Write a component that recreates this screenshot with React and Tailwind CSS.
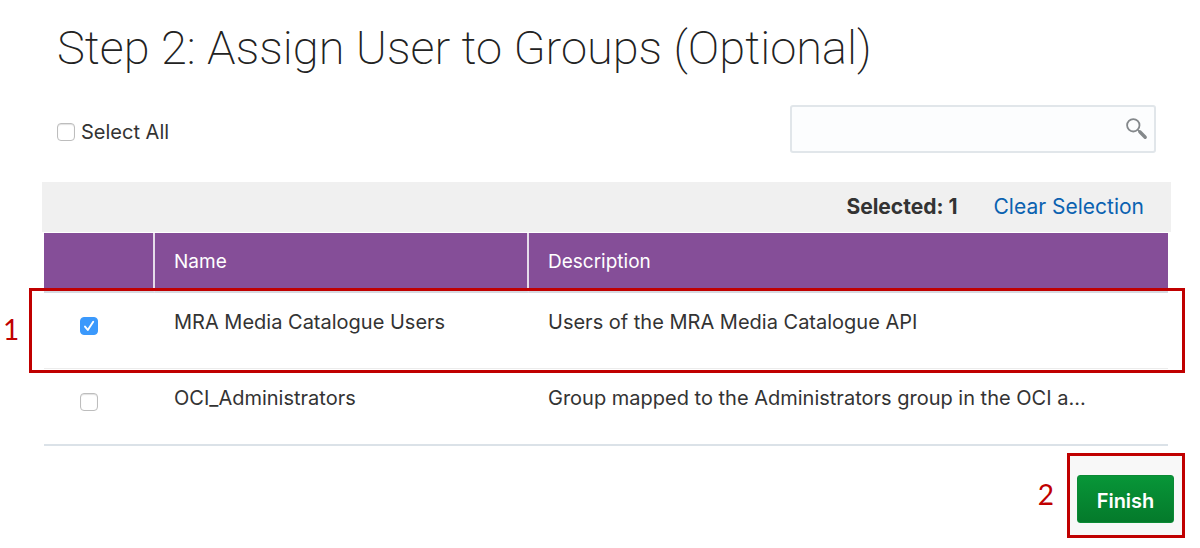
import { useState } from "react";

const groups = [
  {
    id: "mra",
    name: "MRA Media Catalogue Users",
    description: "Users of the MRA Media Catalogue API",
    callout: "1",
  },
  {
    id: "oci",
    name: "OCI_Administrators",
    description: "Group mapped to the Administrators group in the OCI a...",
  },
];

function Checkbox({ id, label, checked, onChange }) {
  return (
    <span className="grid size-[18px] shrink-0">
      <input
        id={id}
        type="checkbox"
        aria-label={label}
        checked={checked}
        onChange={onChange}
        className="col-start-1 row-start-1 size-[18px] appearance-none rounded-[4px] border border-[#bdbdbd] bg-white shadow-[inset_0_1px_1px_rgba(0,0,0,0.12)] checked:border-[#3b99fc] checked:bg-[#3b99fc] checked:shadow-none"
      />
      {checked && (
        <svg
          viewBox="0 0 18 18"
          aria-hidden="true"
          className="pointer-events-none col-start-1 row-start-1 size-[18px]"
        >
          <path
            d="M5 9.6 7.8 13 13.2 4.8"
            fill="none"
            stroke="white"
            strokeWidth="1.9"
            strokeLinecap="round"
            strokeLinejoin="round"
          />
        </svg>
      )}
    </span>
  );
}

export default function App() {
  const [selected, setSelected] = useState(["mra"]);
  const allSelected = selected.length === groups.length;

  const toggle = (id) =>
    setSelected((current) =>
      current.includes(id) ? current.filter((x) => x !== id) : [...current, id]
    );

  return (
    <main className="bg-white pt-4 pr-[29px] pl-[42px] font-[Inter,sans-serif] text-[20px] leading-6 text-[#333333]">
      <h1 className="pl-[15px] font-[Roboto,sans-serif] text-[47px] leading-[64px] font-extralight text-[#222222]">
        Step 2: Assign User to Groups (Optional)
      </h1>

      <div className="mt-[25px] flex items-center justify-between pr-[15px] pl-[15px]">
        <div className="flex items-center gap-[6px] pt-[6px]">
          <Checkbox
            id="select-all"
            checked={allSelected}
            onChange={() => setSelected(allSelected ? [] : groups.map((g) => g.id))}
          />
          <label htmlFor="select-all">Select All</label>
        </div>
        <div className="flex h-12 w-[366px] items-center rounded-[3px] border-2 border-[#e1e6ea] bg-[#fcfdfe] pr-[6px]">
          <input
            type="search"
            aria-label="Search groups"
            className="h-full min-w-0 flex-1 bg-transparent px-3 outline-none"
          />
          <button type="button" aria-label="Search" className="pb-[2px]">
            <svg viewBox="0 0 24 24" className="size-6" fill="none" stroke="#84888b">
              <circle cx="9.3" cy="9.3" r="6.2" strokeWidth="1.8" />
              <path d="M14 14 15.5 15.5" strokeWidth="1.4" />
              <path d="M15.8 15.8 21.2 21.2" strokeWidth="3.4" strokeLinecap="round" />
            </svg>
          </button>
        </div>
      </div>

      <div className="mt-[29px] flex h-[50px] items-center justify-end gap-9 bg-[#f0f0f0] pr-[27px] text-[21px]">
        <strong className="font-bold">Selected: {selected.length}</strong>
        <button type="button" className="text-[#0b62b0]" onClick={() => setSelected([])}>
          Clear Selection
        </button>
      </div>

      <div className="mt-px pr-[3px] pl-[2px]">
        <table className="w-full table-fixed border-separate border-spacing-0 text-left">
          <colgroup>
            <col className="w-[111px]" />
            <col className="w-[374px]" />
            <col />
          </colgroup>
          <thead>
            <tr className="h-[60px] bg-[#854e98] text-[19px] text-white">
              <th className="border-r-2 border-b-2 border-r-[#e6dcea] border-b-[#d6d9e0]" aria-label="Select" />
              <th className="border-r-2 border-b-2 border-r-[#e6dcea] border-b-[#d6d9e0] pl-[19px] font-normal">
                Name
              </th>
              <th className="border-b-2 border-[#d6d9e0] pl-[19px] font-normal">Description</th>
            </tr>
          </thead>
          <tbody>
            {groups.map((group) => (
              <tr
                key={group.id}
                className="group relative h-[76px] align-top last:h-[77px]"
              >
                <td className="border-b border-[#ececec] pt-6 pl-9 group-last:border-b-2 group-last:border-[#dbe2e8]">
                  <Checkbox
                    id={`group-${group.id}`}
                    label={`Select ${group.name}`}
                    checked={selected.includes(group.id)}
                    onChange={() => toggle(group.id)}
                  />
                  {group.callout && (
                    <>
                      <span className="pointer-events-none absolute -top-[5px] -right-[17px] -bottom-1 -left-[15px] border-[3px] border-[#c00000]" />
                      <span className="absolute top-[18px] -left-[41px] font-[Lato,sans-serif] text-[28px] leading-9 text-[#c00000]">
                        {group.callout}
                      </span>
                    </>
                  )}
                </td>
                <td className="border-b border-[#ececec] pt-[17px] pl-[19px] group-last:border-b-2 group-last:border-[#dbe2e8]">
                  {group.name}
                </td>
                <td className="truncate border-b border-[#ececec] pt-[17px] pl-[19px] group-last:border-b-2 group-last:border-[#dbe2e8]">
                  {group.description}
                </td>
              </tr>
            ))}
          </tbody>
        </table>
      </div>

      <div className="-mr-[14px] mt-[7px] flex items-center justify-end gap-[13px]">
        <span className="pb-1 font-[Lato,sans-serif] text-[28px] leading-9 text-[#c00000]">2</span>
        <div className="border-[3px] border-[#c00000] bg-[#f8f8f8] pt-[19px] pr-2 pb-3 pl-[7px]">
          <button
            type="button"
            className="h-12 w-[97px] rounded-[3px] border border-[#0b8a35] bg-linear-to-b from-[#089638] to-[#047a2b] pt-1 font-semibold text-white"
          >
            Finish
          </button>
        </div>
      </div>
    </main>
  );
}
